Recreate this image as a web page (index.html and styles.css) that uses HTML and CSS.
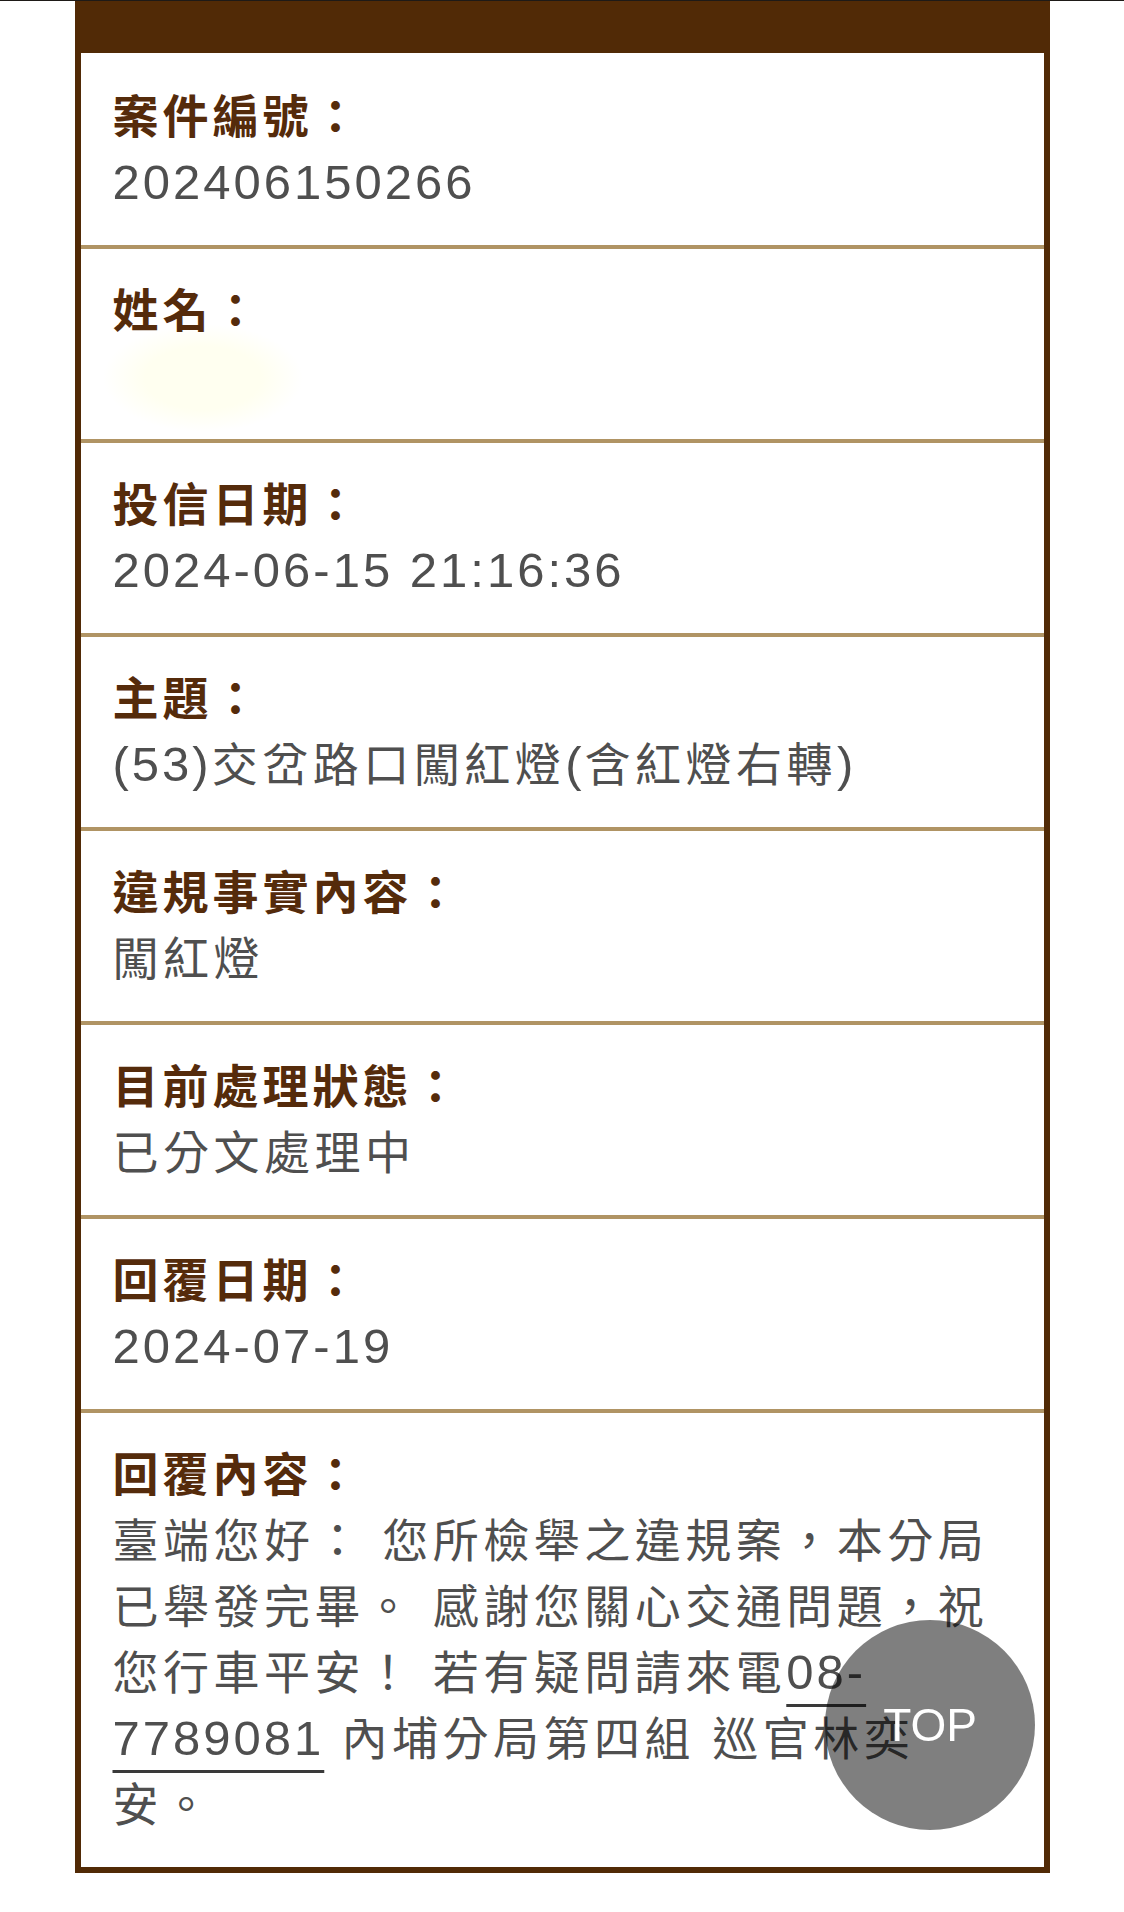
FILE: index.html
```html
<!DOCTYPE html>
<html lang="zh-Hant">
<head>
<meta charset="utf-8">
<title>案件查詢</title>
<link rel="stylesheet" href="styles.css">
</head>
<body>
<div class="topline"></div>
<main class="card">
  <div class="card-head"></div>
  <section class="row row-first">
    <div class="label">案件編號：</div>
    <div class="value"><span class="num">202406150266</span></div>
  </section>
  <section class="row">
    <div class="label">姓名：</div>
    <div class="value"><div class="masked"></div></div>
  </section>
  <section class="row">
    <div class="label">投信日期：</div>
    <div class="value"><span class="num">2024-06-15 21:16:36</span></div>
  </section>
  <section class="row">
    <div class="label">主題：</div>
    <div class="value"><span class="num">(53)</span>交岔路口闖紅燈<span class="num">(</span>含紅燈右轉<span class="num">)</span></div>
  </section>
  <section class="row">
    <div class="label">違規事實內容：</div>
    <div class="value">闖紅燈</div>
  </section>
  <section class="row">
    <div class="label">目前處理狀態：</div>
    <div class="value">已分文處理中</div>
  </section>
  <section class="row">
    <div class="label">回覆日期：</div>
    <div class="value"><span class="num">2024-07-19</span></div>
  </section>
  <section class="row row-last">
    <div class="label">回覆內容：</div>
    <div class="value">臺端您好： 您所檢舉之違規案，本分局已舉發完畢。 感謝您關心交通問題，祝您行車平安！ 若有疑問請來電<a class="tel" href="tel:087789081"><span class="num">08-<wbr>7789081</span></a> 內埔分局第四組 巡官林奕安。</div>
  </section>
</main>
<a class="to-top" href="#">TOP</a>
</body>
</html>
```

FILE: styles.css
```css
html, body {
  margin: 0;
  padding: 0;
  background: #ffffff;
}

body {
  font-family: "Liberation Sans", "Noto Sans CJK TC", sans-serif;
  font-size: 46px;
  line-height: 66px;
  letter-spacing: 4.5px;
  min-height: 1912px;
}

.topline {
  height: 1px;
  background: #1e1a17;
}

.card {
  width: 963px;
  margin: 0 auto;
  border: 6px solid #512a06;
  border-top: 0;
  background: #ffffff;
}

.card-head {
  height: 52px;
  margin: 0 -6px;
  background: #512a06;
}

.row {
  padding: 29px 38px 29px 32px;
  border-bottom: 4px solid #b09464;
}

.row-first {
  padding-top: 31px;
}

.row-last {
  border-bottom: 0;
}

.label {
  font-weight: 700;
  letter-spacing: 4px;
  color: #552b0b;
}

.value {
  color: #4f4f4f;
  min-height: 66px;
}

.num {
  font-size: 49px;
  line-height: 1;
  letter-spacing: 3px;
}

.masked {
  width: 200px;
  height: 108px;
  margin: -20px 0 -22px -10px;
  border-radius: 50%;
  background: radial-gradient(closest-side, #fffff0 0%, #fffff0 58%, rgba(255, 255, 250, 0) 100%);
}

.tel {
  color: #4f4f4f;
  text-decoration: underline;
  text-decoration-thickness: 3px;
  text-underline-offset: 15px;
  text-decoration-color: #3a3a3a;
}

.to-top {
  position: fixed;
  right: 89px;
  bottom: 82px;
  width: 210px;
  height: 210px;
  border-radius: 50%;
  background: rgba(0, 0, 0, 0.5);
  color: #ffffff;
  font-family: "Liberation Sans", sans-serif;
  font-size: 46px;
  letter-spacing: 0;
  line-height: 210px;
  text-align: center;
  text-decoration: none;
}
```
